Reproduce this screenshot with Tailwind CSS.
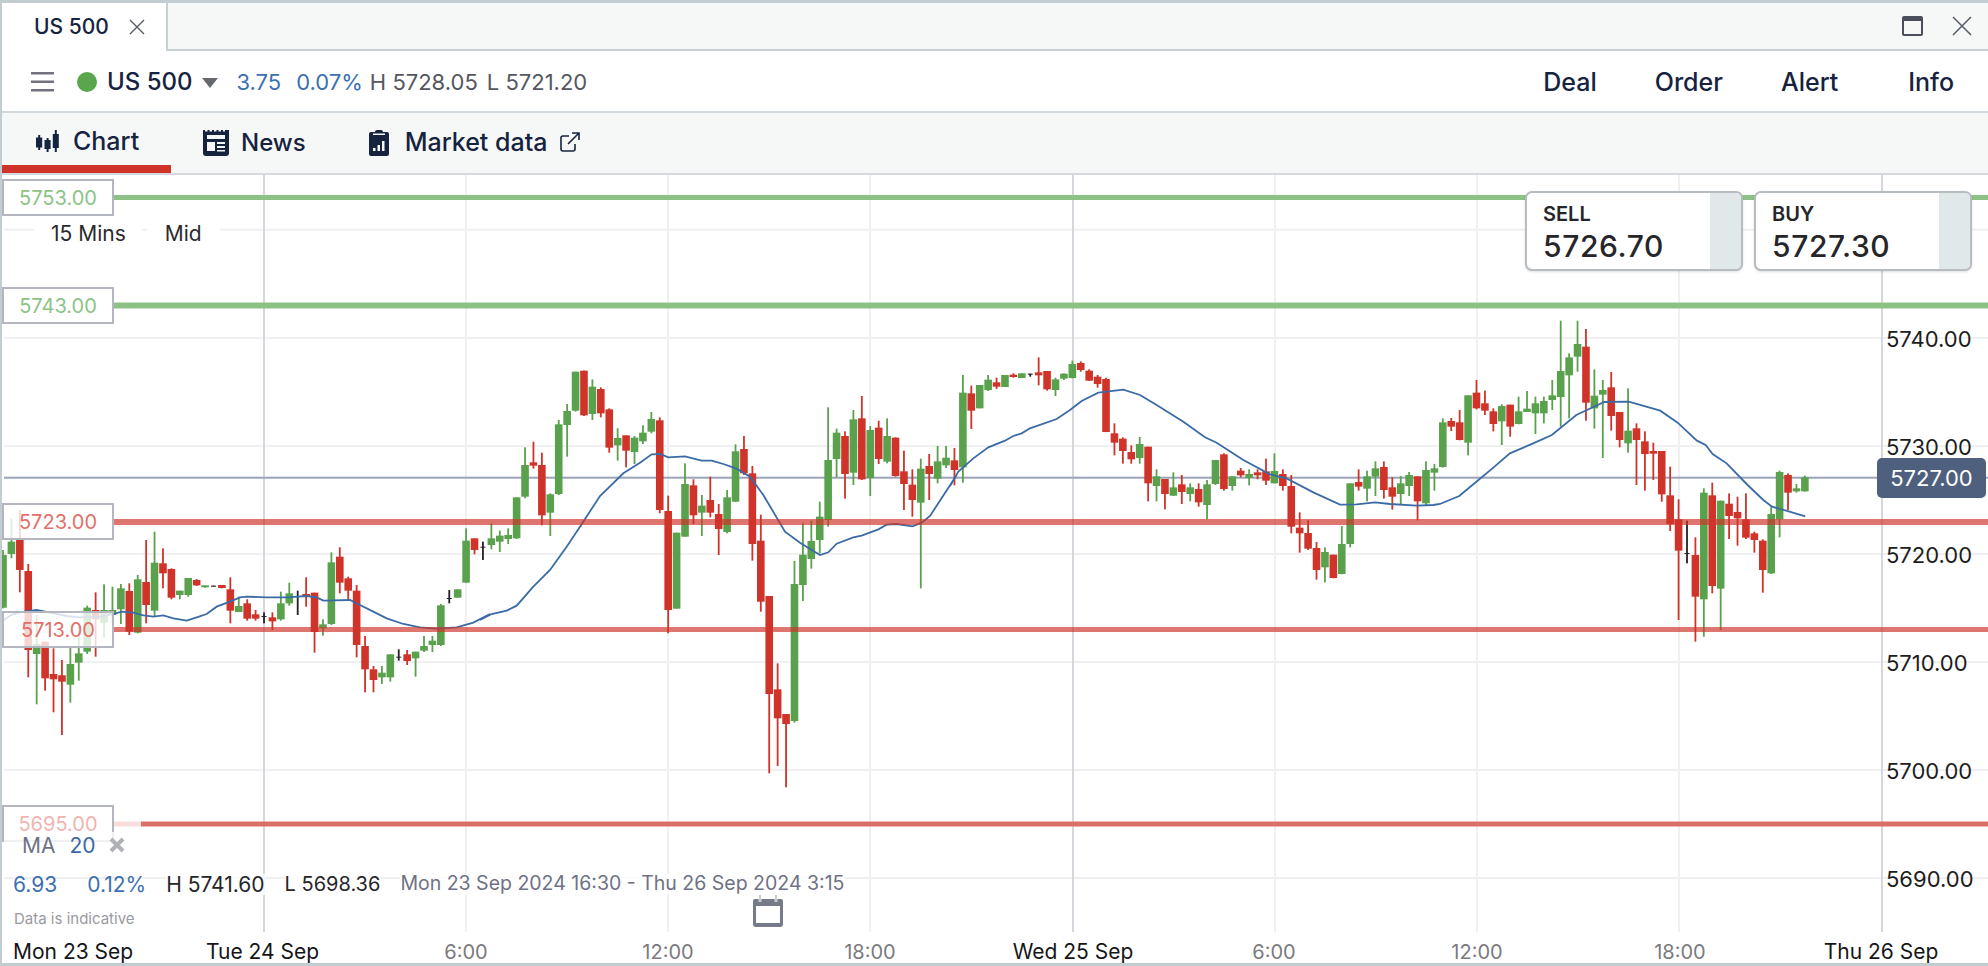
<!DOCTYPE html>
<html lang="en">
<head>
<meta charset="UTF-8" />
<title>US 500</title>
<script src="https://cdn.jsdelivr.net/npm/@tailwindcss/browser@4"></script>
</head>
<body class="bg-white overflow-hidden font-['Inter',sans-serif]">
<div class="w-[1988px] h-[966px] flex flex-col border-l-2 border-t-[3px] border-b-[3px] border-[#c3ccd0] text-[#16233f] overflow-hidden">

  <!-- window tabs -->
  <div class="h-[48px] shrink-0 flex bg-[#f6f8f8] border-b-2 border-[#c8d1d4]">
    <div class="w-[166px] h-[48px] bg-white border-r-2 border-[#c8d1d4] flex items-center pl-[32px] gap-[20px]">
      <span class="text-[21px] font-medium">US 500</span>
      <svg width="16" height="16" viewBox="0 0 16 16" class="stroke-[#555b66]" fill="none" stroke-width="1.4"><path d="M1 1l14 14M15 1L1 15"/></svg>
    </div>
    <div class="ml-auto flex items-center gap-[29px] pr-[16px]">
      <svg width="21" height="20" viewBox="0 0 21 20" fill="none" class="stroke-[#4a4f5a]" stroke-width="2"><rect x="1" y="1" width="19" height="18" rx="1"/><path d="M1 3.5h19" stroke-width="3"/></svg>
      <svg width="20" height="20" viewBox="0 0 20 20" fill="none" class="stroke-[#555b66]" stroke-width="1.5"><path d="M1 1l18 18M19 1L1 19"/></svg>
    </div>
  </div>

  <!-- instrument bar -->
  <div class="h-[62px] shrink-0 flex items-center border-b-2 border-[#d2d9dc] pl-[29px] pr-[34px] pt-[2px]">
    <svg width="23" height="20" viewBox="0 0 23 20" class="fill-[#72737f]"><rect y="0" width="23" height="2.5"/><rect y="8.5" width="23" height="2.5"/><rect y="17" width="23" height="2.5"/></svg>
    <span class="ml-[23px] w-[20px] h-[20px] rounded-full bg-[#5aa64d]"></span>
    <span class="ml-[10px] text-[24px] font-medium leading-none">US 500</span>
    <svg width="16" height="10" viewBox="0 0 16 10" class="ml-[9px] mt-[2px] fill-[#666a70]"><path d="M0 0h16L8 10z"/></svg>
    <span class="ml-[19px] text-[22px] text-[#3c70b0]">3.75</span>
    <span class="ml-[15px] text-[22px] text-[#3c70b0]">0.07%</span>
    <span class="ml-[7px] text-[22px] text-[#55575f]">H 5728.05</span>
    <span class="ml-[9px] text-[22px] text-[#55575f]">L 5721.20</span>
    <div class="ml-auto flex items-center text-[25px] font-medium leading-none">
      <span>Deal</span>
      <span class="ml-[58px]">Order</span>
      <span class="ml-[58px]">Alert</span>
      <span class="ml-[70px]">Info</span>
    </div>
  </div>

  <!-- nav tabs -->
  <div class="h-[62px] shrink-0 flex bg-[#f6f8f8] border-b-2 border-[#d5d8dc] text-[25px] font-medium">
    <div class="w-[169px] h-[60px] flex items-center gap-[14px] pl-[34px] pt-[6px] border-b-[8px] border-[#cf3329]">
      <svg width="23" height="24" viewBox="0 0 23 24" class="fill-[#16233f]"><path d="M2.2 5h2v2.5h2v10h-2V20h-2v-2.5H0v-10h2.2zM10.6 8h2v2h2v9h-2v3h-2v-3H8.500v-9h2.100zM18.800 0h2v4h2v14h-2v4h-2v-4h-2V4h2z"/></svg>
      <span>Chart</span>
    </div>
    <div class="flex items-center h-[60px] pl-[32px] gap-[12px]">
      <svg width="26" height="26" viewBox="0 0 26 26" class="fill-[#16233f]"><path d="M0 0h2v1.500h2.500V0h2v1.500h2.500V0h2v1.500h2.500V0h2v1.500h2.500V0h2v1.500H22V0h4v23a3 3 0 0 1-3 3H3a3 3 0 0 1-3-3z"/><rect x="4" y="5" width="18" height="4" fill="#f6f8f8"/><rect x="4" y="12" width="8" height="9" fill="#f6f8f8"/><rect x="14" y="12" width="8" height="2" fill="#f6f8f8"/><rect x="14" y="16" width="8" height="2" fill="#f6f8f8"/><rect x="14" y="20" width="8" height="1.500" fill="#f6f8f8"/></svg>
      <span class="text-[24px]">News</span>
    </div>
    <div class="flex items-center h-[60px] pl-[63px] gap-[16px]">
      <svg width="20" height="26" viewBox="0 0 20 26" class="fill-[#16233f]"><path d="M6 2a2 2 0 0 1 2-2h4a2 2 0 0 1 2 2h4a2 2 0 0 1 2 2v20a2 2 0 0 1-2 2H2a2 2 0 0 1-2-2V4a2 2 0 0 1 2-2z"/><rect x="4" y="3.500" width="12" height="1.500" fill="#f6f8f8"/><rect x="4" y="18" width="2.500" height="3" fill="#f6f8f8"/><rect x="8.500" y="15" width="2.500" height="6" fill="#f6f8f8"/><rect x="13" y="11" width="2.500" height="10" fill="#f6f8f8"/></svg>
      <span>Market data</span>
      <svg width="20" height="20" viewBox="0 0 20 20" fill="none" class="stroke-[#16233f] ml-[-4px] mb-[2px]" stroke-width="1.6"><path d="M9 4H3a2 2 0 0 0-2 2v11a2 2 0 0 0 2 2h10a2 2 0 0 0 2-2v-5M8 12L19 1M12 1h7v7"/></svg>
    </div>
  </div>

  <!-- chart -->
  <div id="chart" class="relative flex-1 overflow-hidden">
    <svg id="plot" class="absolute left-[-2px] top-[-175px]" width="1988" height="966" viewBox="0 0 1988 966"></svg>

    <!-- level labels -->
    <div class="absolute left-0 top-[4px] w-[112px] h-[37px] border-2 border-[#b3b5bf] bg-white flex items-center justify-center text-[20px] text-[#8cc385]">5753.00</div>
    <div class="absolute left-0 top-[112px] w-[112px] h-[37px] border-2 border-[#b3b5bf] bg-white flex items-center justify-center text-[20px] text-[#8cc385]">5743.00</div>
    <div class="absolute left-0 top-[328px] w-[112px] h-[37px] border-2 border-[#b3b5bf] bg-white/80 flex items-center justify-center text-[20px] text-[#e2706a]">5723.00</div>
    <div class="absolute left-0 top-[436px] w-[112px] h-[37px] border-2 border-[#b3b5bf] bg-white/80 flex items-center justify-center text-[20px] text-[#e2706a]">5713.00</div>
    <div class="absolute left-0 top-[630px] w-[112px] h-[37px] border-2 border-[#b3b5bf] bg-white/80 flex items-center justify-center text-[20px] leading-none text-[#f0b4b0]">5695.00</div>

    <!-- interval -->
    <div class="absolute left-[32px] top-[43px] h-[30px] flex items-center text-[21px] leading-none text-[#2a2a2e]">
      <span class="bg-white/90 pl-[17px] pr-[16px] py-[6px]">15 Mins</span>
      <span class="ml-[5px] bg-white/90 px-[18px] py-[6px]">Mid</span>
    </div>

    <!-- deal tickets -->
    <div class="absolute left-[1523px] top-[16px] w-[218px] h-[80px] bg-white border-2 border-[#b6bcc0] rounded-[7px] shadow-sm flex overflow-hidden text-[#26262a]">
      <div class="flex-1 pl-[16px] pt-[9px]">
        <div class="text-[20px] font-semibold leading-[24px]">SELL</div>
        <div class="text-[30px] font-medium leading-[36px] mt-[2px] tracking-[0.6px]">5726.70</div>
      </div>
      <div class="w-[31px] bg-[#e1e8ea]"></div>
    </div>
    <div class="absolute left-[1752px] top-[16px] w-[218px] h-[80px] bg-white border-2 border-[#b6bcc0] rounded-[7px] shadow-sm flex overflow-hidden text-[#26262a]">
      <div class="flex-1 pl-[16px] pt-[9px]">
        <div class="text-[20px] font-semibold leading-[24px]">BUY</div>
        <div class="text-[30px] font-medium leading-[36px] mt-[2px] tracking-[0.6px]">5727.30</div>
      </div>
      <div class="w-[31px] bg-[#e1e8ea]"></div>
    </div>

    <!-- price axis -->
    <div class="absolute left-[1884px] top-[150px] h-[28px] leading-[28px] text-[22px] text-[#1d1d20]">5740.00</div>
    <div class="absolute left-[1884px] top-[258px] h-[28px] leading-[28px] text-[22px] text-[#1d1d20]">5730.00</div>
    <div class="absolute left-[1884px] top-[366px] h-[28px] leading-[28px] text-[22px] text-[#1d1d20]">5720.00</div>
    <div class="absolute left-[1884px] top-[474px] h-[28px] leading-[28px] text-[22px] text-[#1d1d20]">5710.00</div>
    <div class="absolute left-[1884px] top-[582px] h-[28px] leading-[28px] text-[22px] text-[#1d1d20]">5700.00</div>
    <div class="absolute left-[1884px] top-[690px] h-[28px] leading-[28px] text-[22px] text-[#1d1d20]">5690.00</div>
    <div class="absolute left-[1875px] top-[283px] w-[109px] h-[40px] rounded-[5px] bg-[#4f5f7e] text-white text-[22px] flex items-center justify-center">5727.00</div>

    <!-- ma legend -->
    <div class="absolute left-[2px] top-[657px] h-[26px] pr-[4px] bg-white/80 flex items-center text-[21px] leading-none">
      <span class="ml-[18px] text-[#6e7284]">MA</span>
      <span class="ml-[14px] text-[#3c6aa8]">20</span>
      <svg width="16" height="16" viewBox="0 0 16 16" class="ml-[13px] stroke-[#b0b2b8]" fill="none" stroke-width="4"><path d="M2 2l12 12M14 2L2 14"/></svg>
    </div>

    <!-- range stats -->
    <div class="absolute left-[11px] top-[697px] h-[24px] flex items-center text-[21px] leading-none whitespace-nowrap">
      <span class="text-[#3c70b0]">6.93</span>
      <span class="ml-[30px] text-[#3c70b0]">0.12%</span>
      <span class="ml-[20px] bg-white/80 text-[#26262a]">H 5741.60</span>
      <span class="ml-[20px] bg-white/80 text-[#26262a] text-[20px]">L 5698.36</span>
      <span class="ml-[20px] bg-white/80 text-[#6e7284] text-[19.500px]">Mon 23 Sep 2024 16:30 - Thu 26 Sep 2024 3:15</span>
    </div>
    <div class="absolute left-[12px] top-[735px] text-[15px] leading-[18px] text-[#9a9aa0]">Data is indicative</div>
    <svg width="30" height="32" viewBox="0 0 30 32" class="absolute left-[751px] top-[720px]"><path d="M0 6a2 2 0 0 1 2-2h4V0h2v4h14V0h2v4h4a2 2 0 0 1 2 2v23a3 3 0 0 1-3 3H3a3 3 0 0 1-3-3z" fill="#777a88"/><rect x="3" y="11" width="24" height="17" fill="#fff"/><rect x="5.500" y="0" width="3" height="7" fill="#fff" opacity=".6"/><rect x="21.500" y="0" width="3" height="7" fill="#fff" opacity=".6"/></svg>

    <!-- time axis -->
    <div class="absolute left-[11px] top-[765px] h-[24px] leading-[24px] text-[21px] text-[#151518]">Mon 23 Sep</div>
    <div class="absolute left-[204px] top-[765px] h-[24px] leading-[24px] text-[21px] text-[#151518]">Tue 24 Sep</div>
    <div class="absolute left-[414px] top-[765px] w-[100px] text-center h-[24px] leading-[24px] text-[20px] text-[#7a7a80]">6:00</div>
    <div class="absolute left-[616px] top-[765px] w-[100px] text-center h-[24px] leading-[24px] text-[20px] text-[#7a7a80]">12:00</div>
    <div class="absolute left-[818px] top-[765px] w-[100px] text-center h-[24px] leading-[24px] text-[20px] text-[#7a7a80]">18:00</div>
    <div class="absolute left-[1001px] top-[765px] w-[140px] text-center h-[24px] leading-[24px] text-[21px] text-[#151518]">Wed 25 Sep</div>
    <div class="absolute left-[1222px] top-[765px] w-[100px] text-center h-[24px] leading-[24px] text-[20px] text-[#7a7a80]">6:00</div>
    <div class="absolute left-[1425px] top-[765px] w-[100px] text-center h-[24px] leading-[24px] text-[20px] text-[#7a7a80]">12:00</div>
    <div class="absolute left-[1628px] top-[765px] w-[100px] text-center h-[24px] leading-[24px] text-[20px] text-[#7a7a80]">18:00</div>
    <div class="absolute left-[1809px] top-[765px] w-[140px] text-center h-[24px] leading-[24px] text-[21px] text-[#151518]">Thu 26 Sep</div>
  </div>
</div>

<script>
  // candles: [colour, bodyTop, bodyBottom, wickTop, wickBottom], y read at 3x from y=340
  const candles = [
    ['g',645,803,630,805],['g',605,642,535,655],['r',600,690,510,757],['r',693,930,672,1012],['g',912,942,825,1093],
    ['r',905,1015,905,1052],['r',1002,1018,925,1117],['r',1006,1025,960,1185],['g',972,1034,920,1088],['g',940,968,860,1022],
    ['g',803,935,797,942],['r',810,838,757,950],['g',810,848,733,893],['g',810,825,740,850],['g',745,808,732,852],
    ['r',753,875,730,885],['g',718,878,705,880],['r',726,795,600,850],['g',668,812,575,830],['r',670,700,625,745],
    ['r',687,773,685,778],['g',752,765,752,778],['g',714,765,714,770],['r',720,736,717,738],['g',736,742,736,743],
    ['k',737,740,737,740],['r',735,744,735,745],['r',748,812,712,850],['g',798,816,770,816],['r',790,836,778,842],
    ['r',823,836,810,842],['k',828,831,817,850],['r',832,844,817,870],['g',790,838,755,842],['g',760,790,728,797],
    ['k',768,771,752,825],['r',762,770,712,800],['r',758,876,758,938],['g',853,865,838,887],['g',667,852,637,855],
    ['r',650,728,622,760],['r',715,752,710,778],['r',752,915,735,952],['r',918,988,888,1057],['r',988,1020,978,1057],
    ['g',998,1012,978,1032],['g',943,1012,943,1025],['k',950,953,928,962],['r',943,963,930,975],['g',935,955,935,1010],
    ['g',918,932,888,936],['g',902,915,888,936],['g',796,915,792,918],['k',774,777,750,790],['g',748,773,748,773],
    ['g',602,728,565,728],['r',595,630,595,643],['k',620,623,605,660],['g',595,615,550,628],['g',587,605,572,636],
    ['g',585,597,565,612],['g',472,595,472,597],['g',375,470,322,475],['r',367,377,305,386],['r',375,526,338,556],
    ['g',463,518,460,588],['g',253,462,240,465],['g',213,255,192,350],['g',95,212,95,215],['r',92,226,92,228],
    ['g',140,222,118,240],['r',147,220,142,232],['r',208,323,205,338],['g',294,316,265,362],['r',286,332,286,382],
    ['g',293,336,288,372],['g',278,304,256,312],['g',237,275,216,280],['r',241,510,232,520],['r',513,810,467,880],
    ['g',578,806,578,806],['g',432,590,370,590],['r',436,526,418,552],['g',497,518,465,588],['r',480,518,410,532],
    ['r',522,567,492,645],['g',472,576,450,580],['g',334,485,313,486],['r',327,400,288,405],['r',400,612,378,662],
    ['r',602,785,524,815],['r',768,1062,768,1300],['r',1048,1135,970,1278],['r',1122,1152,1122,1342],['g',732,1143,663,1148],
    ['g',644,735,548,783],['g',603,657,542,686],['g',530,600,485,640],['g',360,540,202,560],['g',278,357,266,412],
    ['r',288,402,274,476],['g',238,398,210,435],['r',235,418,168,420],['g',270,414,258,468],['r',263,357,242,372],
    ['g',288,365,235,370],['r',293,408,292,410],['r',394,432,332,510],['r',434,480,388,530],['g',386,488,356,745],
    ['r',378,402,342,480],['g',364,416,318,430],['g',353,376,318,384],['r',361,390,324,436],['g',158,382,105,428],
    ['r',160,212,137,267],['g',135,205,135,205],['g',119,150,105,153],['r',127,140,113,147],['g',105,141,105,141],
    ['r',104,111,100,113],['g',100,114,100,114],['k',101,104,101,110],['r',97,106,52,136],['r',93,148,93,152],
    ['g',118,150,113,168],['g',101,116,100,120],['g',72,114,62,115],['r',69,90,64,95],['r',92,122,88,123],
    ['r',110,132,105,143],['r',117,276,113,276],['r',280,308,250,346],['r',296,333,292,371],['r',336,358,316,371],
    ['g',312,354,291,371],['r',320,430,320,484],['g',409,438,388,484],['r',417,462,417,508],['g',442,467,397,468],
    ['r',433,456,405,492],['g',442,462,430,484],['r',447,487,430,500],['g',433,495,420,538],['g',360,432,360,435],
    ['r',343,447,340,452],['g',409,438,409,452],['r',392,406,384,412],['g',402,414,388,436],['r',397,406,388,418],
    ['r',394,422,356,435],['g',393,430,340,430],['r',402,438,388,452],['r',438,560,405,580],['r',563,580,517,638],
    ['r',579,626,541,630],['r',624,690,606,719],['g',636,682,622,727],['r',644,714,644,715],['g',612,702,558,703],
    ['g',430,612,430,622],['r',426,440,388,452],['g',409,446,392,484],['g',385,410,364,468],['r',381,450,364,476],
    ['r',442,470,412,509],['g',430,462,408,492],['g',405,438,396,468],['r',409,484,409,541],['g',390,490,364,495],
    ['g',385,398,372,452],['g',247,381,235,383],['r',243,260,234,273],['r',247,300,210,301],['g',166,308,166,346],
    ['r',158,205,120,208],['r',190,212,152,225],['r',214,252,205,274],['g',198,244,193,315],['r',194,260,194,290],
    ['g',214,252,170,253],['g',206,216,153,216],['g',190,220,170,282],['g',183,220,170,250],['g',166,180,120,210],
    ['g',93,171,-58,260],['g',52,106,40,235],['g',12,50,-58,95],['r',20,188,-33,242],['g',167,205,88,266],
    ['g',150,164,120,354],['r',142,228,96,272],['r',216,300,216,322],['g',272,310,145,338],['r',265,300,250,435],
    ['r',304,342,274,452],['r',333,341,308,420],['r',333,463,333,485],['r',466,552,380,573],['r',538,632,478,840],
    ['k',639,642,542,670],['r',645,770,592,905],['g',458,778,445,890],['r',466,738,428,760],['g',482,746,482,870],
    ['r',491,528,460,597],['r',516,535,470,617],['r',538,593,460,597],['r',580,600,575,638],['r',602,690,598,758],
    ['g',522,700,498,702],['g',396,538,392,592],['r',405,458,400,510],['g',445,454,432,458],['g',412,454,407,455]
  ];
  const colours = { g: '#59a14c', r: '#cf3329', k: '#222226' };

  // moving average, [x, y] in page pixels
  const fromZoom = (pts, ox, sx, oy) => pts.map(([x, y]) => [ox + x / sx, oy + y / 3]);
  const ma = [
    ...fromZoom([[0,848],[33,825],[60,817],[110,810],[150,818],[200,828],[240,832],[300,830],[340,822],[365,815],[400,818],[430,826],[460,830],[490,826],[520,835],[560,842],[590,832],[620,822],[650,800],[690,785],[720,772],[740,770],[800,772],[860,772],[920,768],[950,772],[970,782],[1000,781],[1050,780],[1080,795],[1120,815],[1160,835],[1210,852],[1260,862],[1310,866],[1370,862],[1420,848],[1470,822]], 0, 3, 340),
    ...fromZoom([[0,840],[35,822],[80,812],[110,797],[160,740],[210,690],[260,620],[300,560],[360,468],[430,400],[480,368],[515,343],[540,342],[565,352],[615,349],[665,362],[695,362],[730,372],[770,386],[810,410],[850,465],[915,575],[960,608],[1020,645],[1045,637],[1070,611],[1120,592],[1145,587],[1195,568],[1220,554],[1250,552],[1298,559],[1325,548],[1350,528],[1430,405]], 480, 3, 340),
    ...fromZoom([[0,438],[25,395],[70,355],[115,322],[165,302],[190,288],[215,280],[240,265],[320,237],[360,210],[395,183],[445,158],[520,149],[570,165],[620,195],[700,245],[765,292],[800,308],[880,360],[960,403],[1010,415],[1090,457],[1170,494],[1220,493],[1275,487],[1320,492],[1400,497],[1450,495]], 950, 3, 340),
    ...fromZoom([[0,612],[55,588],[110,540],[150,505],[200,460],[260,433],[320,405],[390,345],[470,306],[540,305],[630,332],[680,368],[735,422],[760,435],[780,462],[820,490],[880,555],[925,600],[950,620],[1000,635],[1045,649]], 1440, 2.861, 300)
  ];

  let svg = '';
  const hline = (y, w, c, x1 = 0) => `<rect x="${x1}" y="${y - w / 2}" width="${1988 - x1}" height="${w}" fill="${c}"/>`;
  const vline = (x, c) => `<rect x="${x - 1}" y="174" width="2" height="758" fill="${c}"/>`;

  [229.700, 338, 446, 554, 662, 770, 878].forEach(y => { svg += hline(y, 2, '#f0f0f2', 4); });
  [466, 668, 870, 1275, 1477, 1679].forEach(x => { svg += vline(x, '#f0f0f2'); });
  [264, 1073, 1882].forEach(x => { svg += vline(x, '#d6d7dc'); });

  svg += hline(477.700, 2, '#9aa3b8', 4);

  candles.forEach(([c, top, bottom, wickTop, wickBottom], i) => {
    const x = 3 + 8.42 * i, y = v => 340 + v / 3;
    svg += `<rect x="${x - 0.9}" y="${y(wickTop)}" width="1.8" height="${(wickBottom - wickTop) / 3}" fill="${colours[c]}"/>`;
    const w = c === 'k' ? 5 : 7.600;
    svg += `<rect x="${x - w / 2}" y="${y(top)}" width="${w}" height="${Math.max((bottom - top) / 3, 1)}" fill="${colours[c]}"/>`;
  });

  svg += `<polyline points="${ma.map(p => p.join(',')).join(' ')}" fill="none" stroke="#3b6ba5" stroke-width="1.800"/>`;

  svg += hline(197.500, 5, '#8cc385', 114);
  svg += hline(305.500, 6, '#8cc385', 114);
  svg += hline(522, 6, 'rgba(207,51,41,.68)', 114);
  svg += hline(629.500, 5, 'rgba(207,51,41,.68)', 114);
  svg += `<rect x="114" y="821.500" width="27" height="5" fill="#f7dedd"/>`;
  svg += hline(824, 5, '#dc6e68', 141);

  document.getElementById('plot').innerHTML = svg;
</script>
</body>
</html>
